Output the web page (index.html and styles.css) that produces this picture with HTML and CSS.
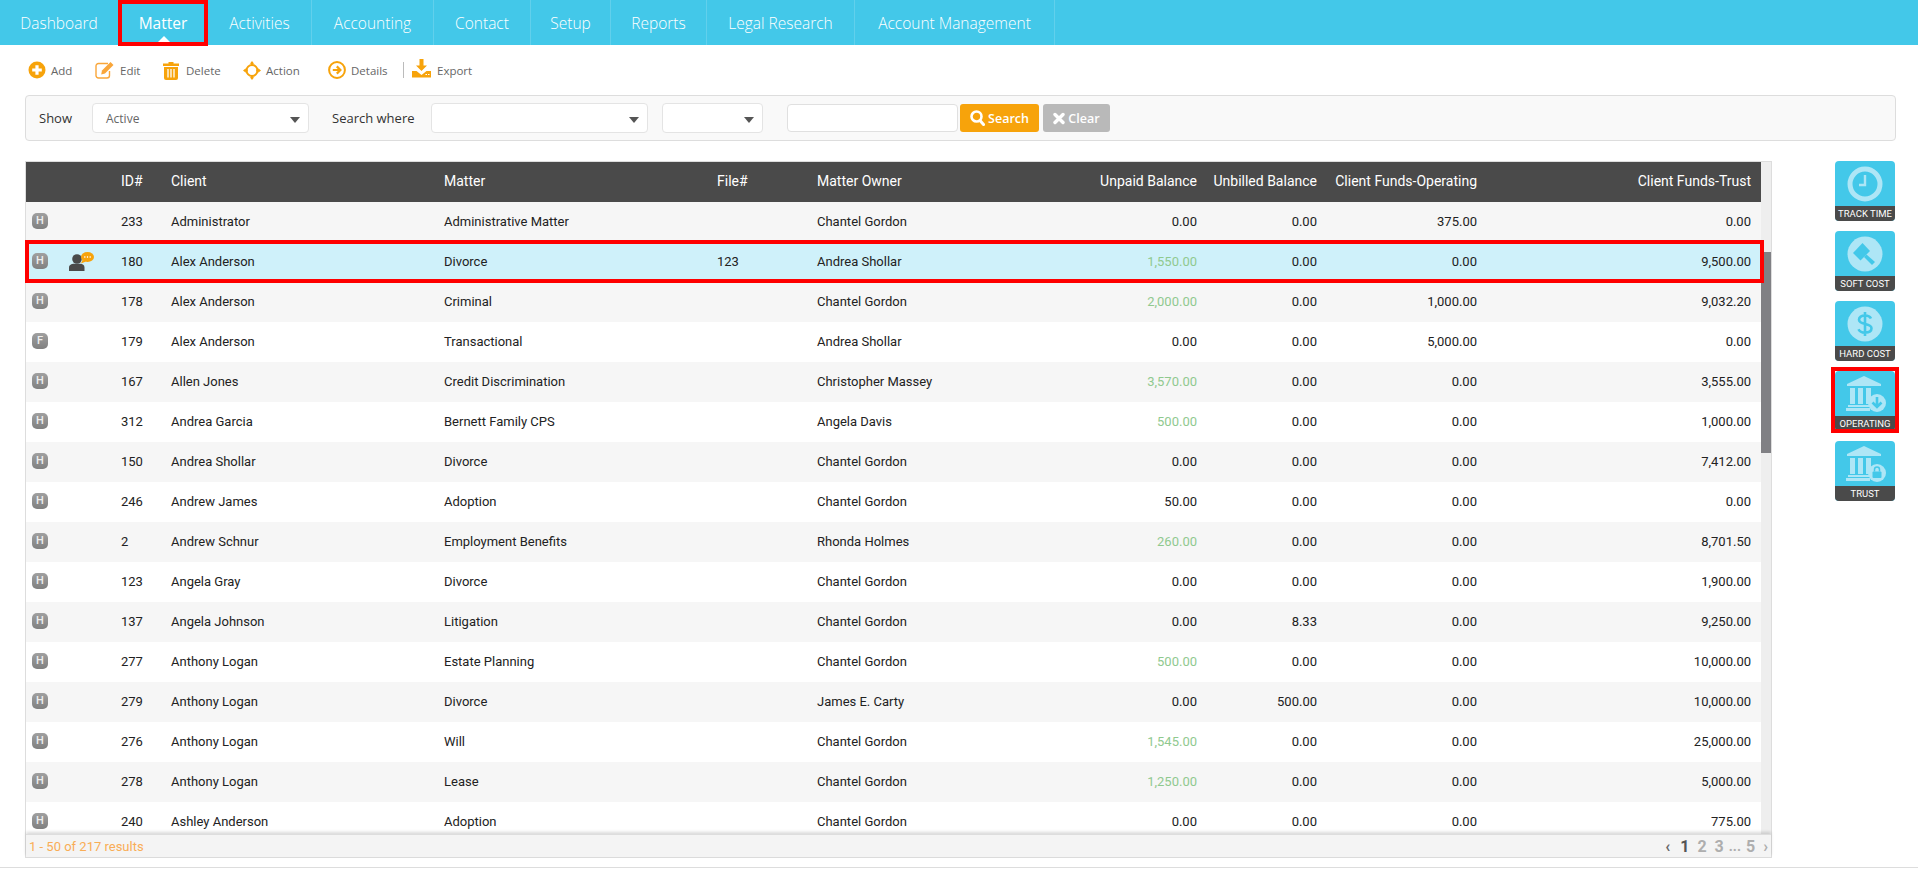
FILE: index.html
```html
<!DOCTYPE html>
<html lang="en">
<head>
<meta charset="utf-8">
<title>Matter</title>
<link rel="stylesheet" href="styles.css">
</head>
<body>
<nav class="nav">
  <a class="nav-item">Dashboard</a>
  <a class="nav-item active">Matter</a>
  <a class="nav-item">Activities</a>
  <a class="nav-item">Accounting</a>
  <a class="nav-item">Contact</a>
  <a class="nav-item">Setup</a>
  <a class="nav-item">Reports</a>
  <a class="nav-item">Legal Research</a>
  <a class="nav-item">Account Management</a>
</nav>

<div class="toolbar">
  <a class="tool">
    <svg width="18" height="18" viewBox="0 0 18 18"><circle cx="9" cy="9" r="8.500" fill="#f7a30b"/><path d="M9 4.200v9.600M4.200 9h9.600" stroke="#fff" stroke-width="3.200"/></svg>
    <span>Add</span>
  </a>
  <a class="tool">
    <svg width="20" height="18" viewBox="0 0 20 18"><path d="M13 2.500H3.500A2.500 2.500 0 0 0 1 5v9.500A2.500 2.500 0 0 0 3.500 17H12a2.500 2.500 0 0 0 2.500-2.500V10" fill="none" stroke="#f9a63a" stroke-width="1.400"/><path d="M7 9.500 15.500 1l3 3L10 12.500l-3.800 1z" fill="#f9a63a"/></svg>
    <span>Edit</span>
  </a>
  <a class="tool tool-del">
    <svg width="16" height="19" viewBox="0 0 16 19"><path d="M5.500 2.500V1h5v1.500H16V5H0V2.500z" fill="#f7a30b"/><path d="M1 6h14v11a2 2 0 0 1-2 2H3a2 2 0 0 1-2-2z" fill="#f7a30b"/><path d="M5 8v8.500M8 8v8.500M11 8v8.500" stroke="#fff" stroke-width="1.300"/></svg>
    <span>Delete</span>
  </a>
  <a class="tool">
    <svg width="18" height="19" viewBox="0 0 18 19"><circle cx="9" cy="9.500" r="5.500" fill="none" stroke="#f7a30b" stroke-width="2"/><path d="M9 0l2.200 2.800h-1.200v2h-2v-2H6.800zM9 19l2.200-2.800h-1.200v-2h-2v2H6.800zM0 9.500l2.800-2.200v1.200h2v2h-2v1.200zM18 9.500l-2.800-2.200v1.200h-2v2h2v1.200z" fill="#f7a30b"/></svg>
    <span>Action</span>
  </a>
  <a class="tool">
    <svg width="18" height="18" viewBox="0 0 18 18"><circle cx="9" cy="9" r="7.900" fill="none" stroke="#f7a30b" stroke-width="2"/><path d="M4.800 9h7.200M8.800 5.400 12.400 9l-3.600 3.600" fill="none" stroke="#f7a30b" stroke-width="2.200"/></svg>
    <span>Details</span>
  </a>
  <i class="tool-sep"></i>
  <a class="tool tool-export">
    <svg width="19" height="19" viewBox="0 0 19 19"><path d="M7.500 0h4v6.500H15L9.500 12 4 6.500h3.500z" fill="#f7a30b"/><path d="M0 12h4.500l5 4 5-4H19v6.500H0z" fill="#f7a30b"/><path d="M13.500 15.500h1.500M16 15.500h1.500" stroke="#fff" stroke-width="1.200"/></svg>
    <span>Export</span>
  </a>
</div>

<form class="filter">
  <label class="filter-label show-label">Show</label>
  <div class="select select-show">Active</div>
  <label class="filter-label where-label">Search where</label>
  <div class="select select-where"></div>
  <div class="select select-op"></div>
  <div class="text-input"></div>
  <button class="btn btn-search" type="button">
    <svg width="15" height="16" viewBox="0 0 15 16"><circle cx="6.500" cy="6.500" r="5" fill="none" stroke="#fff" stroke-width="2.600"/><path d="M10 10.500l3.500 4" stroke="#fff" stroke-width="3" stroke-linecap="round"/></svg>
    Search
  </button>
  <button class="btn btn-clear" type="button">
    <svg width="12" height="13" viewBox="0 0 12 13"><path d="M2 2.500l8 8M10 2.500l-8 8" stroke="#fff" stroke-width="3.400" stroke-linecap="round"/></svg>
    Clear
  </button>
</form>

<main class="content">
  <section class="grid-panel">
    <div class="grid-body">
      <div class="grid-scroll">
        <table class="grid">
          <colgroup>
            <col class="c-flag"><col class="c-note"><col class="c-id"><col class="c-client"><col class="c-matter"><col class="c-file"><col class="c-owner"><col class="c-unpaid"><col class="c-unbilled"><col class="c-oper"><col class="c-trust">
          </colgroup>
          <thead>
            <tr><th></th><th></th><th>ID#</th><th>Client</th><th>Matter</th><th>File#</th><th>Matter Owner</th><th class="num">Unpaid Balance</th><th class="num">Unbilled Balance</th><th class="num">Client Funds-Operating</th><th class="num">Client Funds-Trust</th></tr>
          </thead>
          <tbody>
            <tr><td><b class="badge">H</b></td><td></td><td>233</td><td>Administrator</td><td>Administrative Matter</td><td></td><td>Chantel Gordon</td><td class="num">0.00</td><td class="num">0.00</td><td class="num">375.00</td><td class="num">0.00</td></tr>
            <tr class="selected"><td><b class="badge">H</b></td><td class="note-cell"><svg width="25" height="19" viewBox="0 0 25 19"><circle cx="8" cy="7" r="4.800" fill="#4a4a4a"/><path d="M0 19v-3.500C0 13 2.500 11.800 5 11.800h6c2.500 0 4.500 1.200 4.500 3.700V19z" fill="#4a4a4a"/><ellipse cx="18.500" cy="5" rx="6.500" ry="5" fill="#f7a30b"/><path d="M13.500 8l-1.500 3.500 5-2z" fill="#f7a30b"/><path d="M15.200 5h1.200M17.900 5h1.200M20.600 5h1.200" stroke="#fff" stroke-width="1.300"/></svg></td><td>180</td><td>Alex Anderson</td><td>Divorce</td><td>123</td><td>Andrea Shollar</td><td class="num due">1,550.00</td><td class="num">0.00</td><td class="num">0.00</td><td class="num">9,500.00</td></tr>
            <tr><td><b class="badge">H</b></td><td></td><td>178</td><td>Alex Anderson</td><td>Criminal</td><td></td><td>Chantel Gordon</td><td class="num due">2,000.00</td><td class="num">0.00</td><td class="num">1,000.00</td><td class="num">9,032.20</td></tr>
            <tr><td><b class="badge">F</b></td><td></td><td>179</td><td>Alex Anderson</td><td>Transactional</td><td></td><td>Andrea Shollar</td><td class="num">0.00</td><td class="num">0.00</td><td class="num">5,000.00</td><td class="num">0.00</td></tr>
            <tr><td><b class="badge">H</b></td><td></td><td>167</td><td>Allen Jones</td><td>Credit Discrimination</td><td></td><td>Christopher Massey</td><td class="num due">3,570.00</td><td class="num">0.00</td><td class="num">0.00</td><td class="num">3,555.00</td></tr>
            <tr><td><b class="badge">H</b></td><td></td><td>312</td><td>Andrea Garcia</td><td>Bernett Family CPS</td><td></td><td>Angela Davis</td><td class="num due">500.00</td><td class="num">0.00</td><td class="num">0.00</td><td class="num">1,000.00</td></tr>
            <tr><td><b class="badge">H</b></td><td></td><td>150</td><td>Andrea Shollar</td><td>Divorce</td><td></td><td>Chantel Gordon</td><td class="num">0.00</td><td class="num">0.00</td><td class="num">0.00</td><td class="num">7,412.00</td></tr>
            <tr><td><b class="badge">H</b></td><td></td><td>246</td><td>Andrew James</td><td>Adoption</td><td></td><td>Chantel Gordon</td><td class="num">50.00</td><td class="num">0.00</td><td class="num">0.00</td><td class="num">0.00</td></tr>
            <tr><td><b class="badge">H</b></td><td></td><td>2</td><td>Andrew Schnur</td><td>Employment Benefits</td><td></td><td>Rhonda Holmes</td><td class="num due">260.00</td><td class="num">0.00</td><td class="num">0.00</td><td class="num">8,701.50</td></tr>
            <tr><td><b class="badge">H</b></td><td></td><td>123</td><td>Angela Gray</td><td>Divorce</td><td></td><td>Chantel Gordon</td><td class="num">0.00</td><td class="num">0.00</td><td class="num">0.00</td><td class="num">1,900.00</td></tr>
            <tr><td><b class="badge">H</b></td><td></td><td>137</td><td>Angela Johnson</td><td>Litigation</td><td></td><td>Chantel Gordon</td><td class="num">0.00</td><td class="num">8.33</td><td class="num">0.00</td><td class="num">9,250.00</td></tr>
            <tr><td><b class="badge">H</b></td><td></td><td>277</td><td>Anthony Logan</td><td>Estate Planning</td><td></td><td>Chantel Gordon</td><td class="num due">500.00</td><td class="num">0.00</td><td class="num">0.00</td><td class="num">10,000.00</td></tr>
            <tr><td><b class="badge">H</b></td><td></td><td>279</td><td>Anthony Logan</td><td>Divorce</td><td></td><td>James E. Carty</td><td class="num">0.00</td><td class="num">500.00</td><td class="num">0.00</td><td class="num">10,000.00</td></tr>
            <tr><td><b class="badge">H</b></td><td></td><td>276</td><td>Anthony Logan</td><td>Will</td><td></td><td>Chantel Gordon</td><td class="num due">1,545.00</td><td class="num">0.00</td><td class="num">0.00</td><td class="num">25,000.00</td></tr>
            <tr><td><b class="badge">H</b></td><td></td><td>278</td><td>Anthony Logan</td><td>Lease</td><td></td><td>Chantel Gordon</td><td class="num due">1,250.00</td><td class="num">0.00</td><td class="num">0.00</td><td class="num">5,000.00</td></tr>
            <tr><td><b class="badge">H</b></td><td></td><td>240</td><td>Ashley Anderson</td><td>Adoption</td><td></td><td>Chantel Gordon</td><td class="num">0.00</td><td class="num">0.00</td><td class="num">0.00</td><td class="num">775.00</td></tr>
          </tbody>
        </table>
      </div>
      <div class="scrollbar"><div class="thumb"></div></div>
      <div class="row-mark"></div>
    </div>
    <footer class="grid-foot">
      <span class="results">1 - 50 of 217 results</span>
      <span class="pager"><b class="pg-arrow">‹</b><b class="pg-cur">1</b><b>2</b><b>3</b><b class="pg-dots">...</b><b>5</b><b class="pg-next">›</b></span>
    </footer>
  </section>

  <aside class="tiles">
    <a class="tile">
      <span class="tile-icon"><svg width="36" height="36" viewBox="0 0 36 36"><circle cx="18" cy="18" r="15" fill="none" stroke="#aee6f6" stroke-width="5"/><path d="M18 9v10h-6" fill="none" stroke="#aee6f6" stroke-width="2.400"/></svg></span>
      <span class="tile-label">TRACK TIME</span>
    </a>
    <a class="tile">
      <span class="tile-icon"><svg width="36" height="36" viewBox="0 0 36 36"><circle cx="18" cy="18" r="17.500" fill="#aee6f6"/><path d="M6 17 15.500 7l7.500 8-9.500 9.500z" fill="#43c8e9"/><path d="M19.500 18.500l-2.500 2.500 8 8 3-3z" fill="#43c8e9"/></svg></span>
      <span class="tile-label">SOFT COST</span>
    </a>
    <a class="tile">
      <span class="tile-icon"><svg width="36" height="36" viewBox="0 0 36 36"><circle cx="18" cy="18" r="17.500" fill="#aee6f6"/><path d="M24 12.500c-1-2-3.200-3-6-3-3.500 0-6 1.700-6 4.300 0 5.700 12.500 2.800 12.500 8.500 0 2.700-2.700 4.300-6.500 4.300-3 0-5.500-1.200-6.500-3.400M18 6v24" fill="none" stroke="#43c8e9" stroke-width="2.600"/></svg></span>
      <span class="tile-label">HARD COST</span>
    </a>
    <a class="tile marked">
      <span class="tile-icon bank"><svg width="42" height="36" viewBox="0 0 42 36"><path d="M18 0 35 8v2H1V8z" fill="#aee6f6"/><path d="M4 12h5v16H4zM12 12h5v16h-5zM20 12h5v16h-5z" fill="#aee6f6"/><path d="M2 29h22v2H2zM0 32h24v3H0z" fill="#aee6f6"/><circle cx="31" cy="27" r="9" fill="#aee6f6"/><path d="M31 21v9M26.500 26.500 31 31l4.500-4.500" fill="none" stroke="#43c8e9" stroke-width="2.600"/></svg></span>
      <span class="tile-label">OPERATING</span>
    </a>
    <a class="tile">
      <span class="tile-icon bank"><svg width="42" height="36" viewBox="0 0 42 36"><path d="M18 0 35 8v2H1V8z" fill="#aee6f6"/><path d="M4 12h5v16H4zM12 12h5v16h-5zM20 12h5v16h-5z" fill="#aee6f6"/><path d="M2 29h22v2H2zM0 32h24v3H0z" fill="#aee6f6"/><circle cx="31" cy="27" r="9" fill="#aee6f6"/><rect x="26.500" y="25.500" width="9" height="6.500" rx="1" fill="#43c8e9"/><path d="M28.500 25.500v-2a2.500 2.500 0 0 1 5 0v2" fill="none" stroke="#43c8e9" stroke-width="1.500"/></svg></span>
      <span class="tile-label">TRUST</span>
    </a>
  </aside>
</main>
<div class="page-foot"></div>
</body>
</html>
```
FILE: styles.css
```css
* { box-sizing: border-box; }
html, body { margin: 0; height: 100%; overflow: hidden; background: #fff; }
body { font-family: "Roboto", "Liberation Sans", sans-serif; font-size: 13px; color: #222; }

.nav {
  display: grid;
  grid-template-columns: 118px 90px 104px 122px 97px 80px 96px 148px 200px 1fr;
  height: 45px; background: #43c8e9;
}
.nav-item {
  position: relative;
  display: flex; align-items: center; justify-content: center;
  font-family: "Open Sans", sans-serif; font-weight: 300; font-size: 15.500px;
  color: #fff; white-space: nowrap;
  border-right: 1px solid rgba(255,255,255,.16);
}
.nav-item:first-child, .nav-item.active { border-right: 0; }
.nav-item.active { font-weight: 400; }
.nav-item.active::before {
  content: ""; position: absolute; left: 37px; bottom: 0;
  border: 9px solid transparent; border-top: 0; border-bottom-color: #fff;
}
.nav-item.active::after {
  content: ""; position: absolute; left: 0; right: 0; top: 0; bottom: -1px;
  border: 4px solid #f00;
}

.toolbar {
  display: grid;
  grid-template-columns: 67px 68px 80px 85px 75px 9px 1fr;
  align-items: center;
  height: 50px; padding: 0 0 0 28px;
  font-family: "Open Sans", sans-serif; font-size: 11.500px; color: #666;
}
.tool { display: flex; align-items: center; gap: 5px; }
.tool-del { gap: 7px; }
.tool-sep { width: 1px; height: 16px; background: #bbb; }
.tool-export { gap: 6px; margin-top: -4px; }
.tool-export span { margin-top: 4px; }

.filter {
  display: flex; align-items: center;
  height: 46px; margin: 0 22px 0 25px; padding: 0 0 0 13px;
  background: #f9f9f9; border: 1px solid #ddd; border-radius: 4px;
  font-family: "Open Sans", sans-serif; font-size: 13px; color: #333;
}
.filter-label { white-space: nowrap; }
.show-label { width: 53px; }
.where-label { width: 99px; margin-left: 23px; }
.select {
  position: relative; height: 30px; padding: 0 0 0 13px;
  display: flex; align-items: center;
  background: #fff; border: 1px solid #e4e4e4; border-radius: 4px;
  color: #666; font-size: 12px;
}
.select::after {
  content: ""; position: absolute; right: 8px; top: 13px;
  border: 5px solid transparent; border-bottom: 0; border-top: 6px solid #555;
}
.select-show { width: 217px; }
.select-where { width: 217px; }
.select-op { width: 101px; margin-left: 14px; }
.text-input { width: 171px; height: 28px; margin-left: 24px; background: #fff; border: 1px solid #e0e0e0; border-radius: 4px; }
.btn {
  display: flex; align-items: center; justify-content: center; gap: 3px;
  height: 28px; border: 0; border-radius: 3px; padding: 0;
  font-family: "Open Sans", sans-serif; font-size: 12.500px; font-weight: 600; color: #fff;
}
.btn-search { width: 79px; margin-left: 2px; background: #f7a30b; }
.btn-clear { width: 67px; margin-left: 4px; background: #b9b9b9; }

.content { display: flex; align-items: flex-start; gap: 63px; margin: 20px 0 0 25px; }

.grid-panel { width: 1747px; height: 697px; display: flex; flex-direction: column; border: 1px solid #ddd; }
.grid-body { position: relative; flex: 1; min-height: 0; display: flex; }
.grid-scroll { width: 1735px; overflow: hidden; }
.grid { width: 1735px; table-layout: fixed; border-collapse: collapse; }
.c-flag { width: 33px; } .c-note { width: 62px; } .c-id { width: 50px; } .c-client { width: 273px; } .c-matter { width: 273px; }
.c-file { width: 100px; } .c-owner { width: 243px; } .c-unpaid { width: 147px; } .c-unbilled { width: 120px; } .c-oper { width: 160px; } .c-trust { width: 274px; }
.grid th { height: 40px; padding: 0 0 2px; background: #4a4a4a; color: #fff; font-size: 14px; font-weight: 400; text-align: left; white-space: nowrap; }
.grid td { height: 40px; padding: 0 0 2px; white-space: nowrap; color: #222; }
.grid th.num, .grid td.num { text-align: right; padding-right: 10px; }
.grid tbody tr:nth-child(odd) td { background: #f6f6f6; }
.grid tbody tr:nth-child(even) td { background: #fff; }
.grid tbody tr.selected td { background: #cff1fa; }
.grid td.due { color: #90c98f; }
.grid td:first-child { padding-left: 6px; }
.badge {
  display: block; width: 16px; height: 16px; border-radius: 5px;
  background: linear-gradient(#a0a0a0, #808080);
  color: #eee; font-size: 11px; font-weight: 500; line-height: 16px; text-align: center;
}
.note-cell svg { display: block; margin-left: 10px; }

.scrollbar { width: 10px; background: #eee; padding-top: 90px; }
.thumb { height: 201px; background: #808084; border-radius: 3px 0 0 0; }
.row-mark { position: absolute; left: -1px; top: 78px; width: 1739px; height: 43px; border: 4px solid #f00; pointer-events: none; }

.grid-foot {
  height: 23px; flex: none; display: flex; align-items: center; justify-content: space-between;
  padding: 0 3px 0 3px; background: #f4f4f4; border-top: 1px solid #ddd;
  box-shadow: 0 -2px 3px rgba(0,0,0,.15); position: relative;
}
.results { color: #f9ad56; font-size: 13px; }
.pager { display: flex; align-items: center; font-size: 16px; color: #aeaeae; gap: 8px; }
.pager b { font-weight: 700; }
.pg-arrow { color: #666; margin-right: 2px; }
.pg-cur { color: #555; }
.pg-dots { font-size: 14px; margin: 0 -3px; font-weight: 400; }

.tiles { display: flex; flex-direction: column; gap: 10px; width: 60px; }
.tile { position: relative; display: flex; flex-direction: column; height: 60px; background: #43c8e9; border-radius: 4px; }
.tile-icon { flex: 1; display: flex; align-items: center; justify-content: center; padding-top: 1px; }
.tile-icon.bank { padding-left: 3px; padding-top: 0; }
.tile-icon svg { display: block; }
.tile-label {
  height: 15px; background: #4a4a4a; border-radius: 0 0 4px 4px;
  color: #fff; font-family: "Roboto", sans-serif; font-size: 9.500px; font-weight: 400; line-height: 15px; text-align: center; white-space: nowrap;
}
.tile.marked::after { content: ""; position: absolute; left: -4px; right: -4px; top: -4px; bottom: -2px; border: 4px solid #f00; }

.page-foot { margin-top: 9px; height: 3px; border-top: 1px solid #ddd; background: #fff; }
```
